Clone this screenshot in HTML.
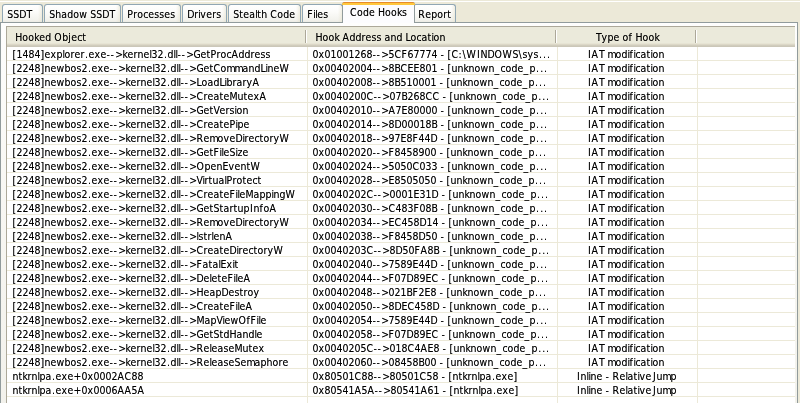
<!DOCTYPE html><html><head><meta charset="utf-8"><title>Code Hooks</title><style>

html,body{margin:0;padding:0}
body{width:800px;height:403px;overflow:hidden;background:#ECE9D8;position:relative;font:11px 'DejaVu Sans Condensed','DejaVu Sans','Liberation Sans',sans-serif;color:#000}
.topline{position:absolute;left:0;top:1px;width:800px;height:1px;background:#fff}
.tab{position:absolute;top:4px;height:18px;box-sizing:border-box;border:1px solid #91A7B4;border-bottom:none;border-radius:3px 3px 0 0;background:linear-gradient(to right,rgba(236,233,216,0) calc(100% - 4px),rgba(226,222,200,.35) calc(100% - 1px),rgba(226,222,200,.5) 100%),linear-gradient(#FFFFFF 0,#FCFCFA 40%,#F3F3EE 85%,#ECEBE4 100%)}
.sel{top:2px;height:21px;background:#FCFCFE;border-color:#919B9C;z-index:3}
.sel:before{content:"";position:absolute;left:-1px;right:-1px;top:-1px;height:3px;border-radius:3px 3px 0 0;background:linear-gradient(#E68B2C 0,#E68B2C 33%,#FFC73C 34%,#FFC73C 100%)}
.panel{position:absolute;left:0;top:22px;width:798px;height:400px;box-sizing:border-box;border:1px solid #919B9C;background:linear-gradient(#FEFEFD,#F8F7F3 45%,#F2F1EB)}
.list{position:absolute;left:6px;top:26px;width:789px;height:400px;box-sizing:border-box;border:1px solid #ACA899;border-right:none;border-bottom:none;background:#fff}
.hdr{position:absolute;left:0;top:0;width:788px;height:20px;background:linear-gradient(#EBEADB 0,#EBEADB 16px,#E2DECD 17px,#D6D2C2 18px,#CBC7B8 19px,#CBC7B8 20px)}
.sep{position:absolute;top:3px;height:13px;width:1px;background:#ACA899;border-right:1px solid #fff}
.row{position:absolute;left:0;width:788px;height:13px;border-bottom:1px solid #ECE9D8}
.vl{position:absolute;top:20px;width:1px;height:400px;background:#ECE9D8}
svg.txt{position:absolute;left:0;top:0;overflow:visible;filter:grayscale(1);font:11px 'DejaVu Sans Condensed','DejaVu Sans','Liberation Sans',sans-serif;font-stretch:condensed;fill:#000;text-shadow:0 0 0 rgba(0,0,0,.5);white-space:pre}

</style></head><body>
<div class="topline"></div>
<div class="panel"></div>
<div class="tabs">
<div class="tab" style="left:2px;width:41px"><svg class="txt" width="39" height="17"><g transform="scale(0.95,1)">
<text y="13" x="4.421 10.74 17.05 24.84">SSDT</text>
</g></svg></div>
<div class="tab" style="left:44px;width:77px"><svg class="txt" width="75" height="17"><g transform="scale(0.95,1)">
<text y="13" x="4.421 10.74 17.05 23.37 29.68 36 44.42 47.58 53.89 60.21 68">Shadow SSDT</text>
</g></svg></div>
<div class="tab" style="left:122px;width:59px"><svg class="txt" width="57" height="17"><g transform="scale(0.95,1)">
<text y="13" x="4.421 10.74 14.95 21.26 26.53 32.84 38.11 43.37 49.68">Processes</text>
</g></svg></div>
<div class="tab" style="left:182px;width:45px"><svg class="txt" width="43" height="17"><g transform="scale(0.95,1)">
<text y="13" x="4.421 11.79 16 18.11 24.42 30.74 34.95">Drivers</text>
</g></svg></div>
<div class="tab" style="left:228px;width:73px"><svg class="txt" width="71" height="17"><g transform="scale(0.95,1)">
<text y="13" x="4.421 10.74 14.95 21.26 27.58 29.68 33.89 40.21 43.37 50.74 57.05 63.37">Stealth Code</text>
</g></svg></div>
<div class="tab" style="left:302px;width:41px"><svg class="txt" width="39" height="17"><g transform="scale(0.95,1)">
<text y="13" x="4.421 10.74 12.84 14.95 21.26">Files</text>
</g></svg></div>
<div class="tab sel" style="left:342px;width:73px"><svg class="txt" width="71" height="17"><g transform="scale(0.95,1)">
<text y="13" x="7.263 14.63 20.95 27.26 33.58 36.74 44.11 50.42 56.74 62">Code Hooks</text>
</g></svg></div>
<div class="tab" style="left:413px;width:43px"><svg class="txt" width="41" height="17"><g transform="scale(0.95,1)">
<text y="13" x="4.421 11.79 18.11 24.42 30.74 34.95">Report</text>
</g></svg></div>
</div>
<div class="list">
<div class="hdr"><svg class="txt" width="788" height="20"><g transform="scale(0.95,1)">
<text y="14" x="8.632 16 22.32 28.63 33.89 40.21 46.53 49.68 58.11 64.42 67.58 73.89 79.16">Hooked Object</text>
<text y="14" x="324.7 332.1 338.4 344.7 350 353.2 360.5 366.8 373.2 377.4 383.7 388.9 394.2 397.4 403.7 410 416.3 419.5 424.7 431.1 436.3 442.6 446.8 448.9 455.3">Hook Address and Location</text>
<text y="14" x="619.9 625.8 632.1 638.4 644.7 647.9 654.2 658.4 661.6 668.9 675.3 681.6">Type of Hook</text>
</g></svg>
<div class="sep" style="left:298px"></div>
<div class="sep" style="left:548px"></div>
<div class="sep" style="left:688px"></div>
</div>
<div class="row" style="top:20px"><svg class="txt" width="788" height="14"><g transform="scale(0.95,1)">
<text y="11" x="5.789 10 16.32 22.63 28.95 35.26 39.47 45.79 52.11 58.42 60.53 66.84 71.05 77.37 82.21 85.79 92.11 98.42 104.7 108.9 114 121.6 126.8 133.2 137.4 143.7 150 152.1 158.4 165.4 168.9 175.3 177.4 179.5 183.7 188.7 196.3 203.7 210 214.2 220.5 224.7 231.1 236.3 243.7 250 256.3 260.5 266.8 272.1">[1484]explorer.exe-->kernel32.dll-->GetProcAddress</text>
<text y="11" x="321.6 327.9 334.2 340.5 346.8 353.2 359.5 365.8 372.1 378.4 384.7 388.9 394 401.6 407.9 415.3 421.6 427.9 434.2 440.5 446.8 453.2 456.3 460.5 463.7 467.9 475.3 479.5 483.7 494.8 498.4 505.8 513.2 521.6 532.1 538.4 542.6 547.9 554.2 560.1 564.3 568.5">0x01001268-->5CF67774 - [C:\WINDOWS\sys...</text>
<text y="11" x="611.7 615.3 623.1 628.9 632.1 640.5 646.8 653.2 655.3 659.5 661.6 666.8 673.2 677.4 679.5 685.8">IAT modification</text>
</g></svg></div>
<div class="row" style="top:34px"><svg class="txt" width="788" height="14"><g transform="scale(0.95,1)">
<text y="11" x="5.789 10 16.32 22.63 28.95 35.26 39.47 45.79 52.11 60.53 66.84 73.16 78.42 85.37 88.95 95.26 101.6 107.9 112.1 117.2 124.7 130 136.3 140.5 146.8 153.2 155.3 161.6 168.5 172.1 178.4 180.5 182.6 186.8 191.9 199.5 206.8 213.2 217.4 224.7 231.1 239.5 247.9 254.2 260.5 266.8 272.1 274.2 280.5 286.8">[2248]newbos2.exe-->kernel32.dll-->GetCommandLineW</text>
<text y="11" x="321.6 327.9 334.2 340.5 346.8 353.2 359.5 365.8 372.1 378.4 384.7 388.9 394 401.6 407.9 414.2 421.6 427.9 434.2 440.5 446.8 453.2 456.3 460.5 463.7 467.9 474.2 480.5 485.8 492.1 498.4 506.8 513.2 519.5 524.7 531.1 537.4 543.7 550 556.9 561.2 565.4">0x00402004-->8BCEE801 - [unknown_code_p...</text>
<text y="11" x="611.7 615.3 623.1 628.9 632.1 640.5 646.8 653.2 655.3 659.5 661.6 666.8 673.2 677.4 679.5 685.8">IAT modification</text>
</g></svg></div>
<div class="row" style="top:48px"><svg class="txt" width="788" height="14"><g transform="scale(0.95,1)">
<text y="11" x="5.789 10 16.32 22.63 28.95 35.26 39.47 45.79 52.11 60.53 66.84 73.16 78.42 85.37 88.95 95.26 101.6 107.9 112.1 117.2 124.7 130 136.3 140.5 146.8 153.2 155.3 161.6 168.5 172.1 178.4 180.5 182.6 186.8 191.9 199.5 204.7 211.1 217.4 223.7 228.9 231.1 237.4 241.6 247.9 252.1 258.4">[2248]newbos2.exe-->kernel32.dll-->LoadLibraryA</text>
<text y="11" x="321.6 327.9 334.2 340.5 346.8 353.2 359.5 365.8 372.1 378.4 384.7 388.9 394 401.6 407.9 414.2 420.5 426.8 433.2 439.5 445.8 452.1 455.3 459.5 462.6 466.8 473.2 479.5 484.7 491.1 497.4 505.8 512.1 518.4 523.7 530 536.3 542.6 548.9 555.9 560.1 564.3">0x00402008-->8B510001 - [unknown_code_p...</text>
<text y="11" x="611.7 615.3 623.1 628.9 632.1 640.5 646.8 653.2 655.3 659.5 661.6 666.8 673.2 677.4 679.5 685.8">IAT modification</text>
</g></svg></div>
<div class="row" style="top:62px"><svg class="txt" width="788" height="14"><g transform="scale(0.95,1)">
<text y="11" x="5.789 10 16.32 22.63 28.95 35.26 39.47 45.79 52.11 60.53 66.84 73.16 78.42 85.37 88.95 95.26 101.6 107.9 112.1 117.2 124.7 130 136.3 140.5 146.8 153.2 155.3 161.6 168.5 172.1 178.4 180.5 182.6 186.8 191.9 199.5 206.8 211.1 217.4 223.7 227.9 234.2 242.6 248.9 253.2 259.5 265.8">[2248]newbos2.exe-->kernel32.dll-->CreateMutexA</text>
<text y="11" x="321.6 327.9 334.2 340.5 346.8 353.2 359.5 365.8 372.1 378.4 385.8 390 395.1 402.6 408.9 415.3 421.6 427.9 434.2 440.5 447.9 455.3 458.4 462.6 465.8 470 476.3 482.6 487.9 494.2 500.5 508.9 515.3 521.6 526.8 533.2 539.5 545.8 552.1 559.1 563.3 567.5">0x0040200C-->07B268CC - [unknown_code_p...</text>
<text y="11" x="611.7 615.3 623.1 628.9 632.1 640.5 646.8 653.2 655.3 659.5 661.6 666.8 673.2 677.4 679.5 685.8">IAT modification</text>
</g></svg></div>
<div class="row" style="top:76px"><svg class="txt" width="788" height="14"><g transform="scale(0.95,1)">
<text y="11" x="5.789 10 16.32 22.63 28.95 35.26 39.47 45.79 52.11 60.53 66.84 73.16 78.42 85.37 88.95 95.26 101.6 107.9 112.1 117.2 124.7 130 136.3 140.5 146.8 153.2 155.3 161.6 168.5 172.1 178.4 180.5 182.6 186.8 191.9 199.5 206.8 213.2 217.4 223.7 230 234.2 239.5 241.6 247.9">[2248]newbos2.exe-->kernel32.dll-->GetVersion</text>
<text y="11" x="321.6 327.9 334.2 340.5 346.8 353.2 359.5 365.8 372.1 378.4 384.7 388.9 394 401.6 408.9 415.3 421.6 427.9 434.2 440.5 446.8 453.2 456.3 460.5 463.7 467.9 474.2 480.5 485.8 492.1 498.4 506.8 513.2 519.5 524.7 531.1 537.4 543.7 550 556.9 561.2 565.4">0x00402010-->A7E80000 - [unknown_code_p...</text>
<text y="11" x="611.7 615.3 623.1 628.9 632.1 640.5 646.8 653.2 655.3 659.5 661.6 666.8 673.2 677.4 679.5 685.8">IAT modification</text>
</g></svg></div>
<div class="row" style="top:90px"><svg class="txt" width="788" height="14"><g transform="scale(0.95,1)">
<text y="11" x="5.789 10 16.32 22.63 28.95 35.26 39.47 45.79 52.11 60.53 66.84 73.16 78.42 85.37 88.95 95.26 101.6 107.9 112.1 117.2 124.7 130 136.3 140.5 146.8 153.2 155.3 161.6 168.5 172.1 178.4 180.5 182.6 186.8 191.9 199.5 206.8 211.1 217.4 223.7 227.9 234.2 240.5 242.6 248.9">[2248]newbos2.exe-->kernel32.dll-->CreatePipe</text>
<text y="11" x="321.6 327.9 334.2 340.5 346.8 353.2 359.5 365.8 372.1 378.4 384.7 388.9 394 401.6 407.9 415.3 421.6 427.9 434.2 440.5 446.8 453.2 456.3 460.5 463.7 467.9 474.2 480.5 485.8 492.1 498.4 506.8 513.2 519.5 524.7 531.1 537.4 543.7 550 556.9 561.2 565.4">0x00402014-->8D00018B - [unknown_code_p...</text>
<text y="11" x="611.7 615.3 623.1 628.9 632.1 640.5 646.8 653.2 655.3 659.5 661.6 666.8 673.2 677.4 679.5 685.8">IAT modification</text>
</g></svg></div>
<div class="row" style="top:104px"><svg class="txt" width="788" height="14"><g transform="scale(0.95,1)">
<text y="11" x="5.789 10 16.32 22.63 28.95 35.26 39.47 45.79 52.11 60.53 66.84 73.16 78.42 85.37 88.95 95.26 101.6 107.9 112.1 117.2 124.7 130 136.3 140.5 146.8 153.2 155.3 161.6 168.5 172.1 178.4 180.5 182.6 186.8 191.9 199.5 206.8 213.2 221.6 227.9 234.2 240.5 247.9 250 254.2 260.5 265.8 270 276.3 280.5 286.8">[2248]newbos2.exe-->kernel32.dll-->RemoveDirectoryW</text>
<text y="11" x="321.6 327.9 334.2 340.5 346.8 353.2 359.5 365.8 372.1 378.4 384.7 388.9 394 401.6 407.9 414.2 420.5 426.8 433.2 439.5 445.8 453.2 456.3 460.5 463.7 467.9 474.2 480.5 485.8 492.1 498.4 506.8 513.2 519.5 524.7 531.1 537.4 543.7 550 556.9 561.2 565.4">0x00402018-->97E8F44D - [unknown_code_p...</text>
<text y="11" x="611.7 615.3 623.1 628.9 632.1 640.5 646.8 653.2 655.3 659.5 661.6 666.8 673.2 677.4 679.5 685.8">IAT modification</text>
</g></svg></div>
<div class="row" style="top:118px"><svg class="txt" width="788" height="14"><g transform="scale(0.95,1)">
<text y="11" x="5.789 10 16.32 22.63 28.95 35.26 39.47 45.79 52.11 60.53 66.84 73.16 78.42 85.37 88.95 95.26 101.6 107.9 112.1 117.2 124.7 130 136.3 140.5 146.8 153.2 155.3 161.6 168.5 172.1 178.4 180.5 182.6 186.8 191.9 199.5 206.8 213.2 217.4 223.7 225.8 227.9 234.2 240.5 242.6 247.9">[2248]newbos2.exe-->kernel32.dll-->GetFileSize</text>
<text y="11" x="321.6 327.9 334.2 340.5 346.8 353.2 359.5 365.8 372.1 378.4 384.7 388.9 394 401.6 407.9 414.2 420.5 426.8 433.2 439.5 445.8 452.1 455.3 459.5 462.6 466.8 473.2 479.5 484.7 491.1 497.4 505.8 512.1 518.4 523.7 530 536.3 542.6 548.9 555.9 560.1 564.3">0x00402020-->F8458900 - [unknown_code_p...</text>
<text y="11" x="611.7 615.3 623.1 628.9 632.1 640.5 646.8 653.2 655.3 659.5 661.6 666.8 673.2 677.4 679.5 685.8">IAT modification</text>
</g></svg></div>
<div class="row" style="top:132px"><svg class="txt" width="788" height="14"><g transform="scale(0.95,1)">
<text y="11" x="5.789 10 16.32 22.63 28.95 35.26 39.47 45.79 52.11 60.53 66.84 73.16 78.42 85.37 88.95 95.26 101.6 107.9 112.1 117.2 124.7 130 136.3 140.5 146.8 153.2 155.3 161.6 168.5 172.1 178.4 180.5 182.6 186.8 191.9 199.5 207.9 214.2 220.5 226.8 233.2 239.5 245.8 252.1 256.3">[2248]newbos2.exe-->kernel32.dll-->OpenEventW</text>
<text y="11" x="321.6 327.9 334.2 340.5 346.8 353.2 359.5 365.8 372.1 378.4 384.7 388.9 394 401.6 407.9 414.2 420.5 426.8 434.2 440.5 446.8 453.2 456.3 460.5 463.7 467.9 474.2 480.5 485.8 492.1 498.4 506.8 513.2 519.5 524.7 531.1 537.4 543.7 550 556.9 561.2 565.4">0x00402024-->5050C033 - [unknown_code_p...</text>
<text y="11" x="611.7 615.3 623.1 628.9 632.1 640.5 646.8 653.2 655.3 659.5 661.6 666.8 673.2 677.4 679.5 685.8">IAT modification</text>
</g></svg></div>
<div class="row" style="top:146px"><svg class="txt" width="788" height="14"><g transform="scale(0.95,1)">
<text y="11" x="5.789 10 16.32 22.63 28.95 35.26 39.47 45.79 52.11 60.53 66.84 73.16 78.42 85.37 88.95 95.26 101.6 107.9 112.1 117.2 124.7 130 136.3 140.5 146.8 153.2 155.3 161.6 168.5 172.1 178.4 180.5 182.6 186.8 191.9 199.5 205.8 207.9 212.1 216.3 222.6 228.9 231.1 237.4 241.6 247.9 252.1 258.4 263.7">[2248]newbos2.exe-->kernel32.dll-->VirtualProtect</text>
<text y="11" x="321.6 327.9 334.2 340.5 346.8 353.2 359.5 365.8 372.1 378.4 384.7 388.9 394 401.6 407.9 414.2 420.5 426.8 433.2 439.5 445.8 452.1 455.3 459.5 462.6 466.8 473.2 479.5 484.7 491.1 497.4 505.8 512.1 518.4 523.7 530 536.3 542.6 548.9 555.9 560.1 564.3">0x00402028-->E8505050 - [unknown_code_p...</text>
<text y="11" x="611.7 615.3 623.1 628.9 632.1 640.5 646.8 653.2 655.3 659.5 661.6 666.8 673.2 677.4 679.5 685.8">IAT modification</text>
</g></svg></div>
<div class="row" style="top:160px"><svg class="txt" width="788" height="14"><g transform="scale(0.95,1)">
<text y="11" x="5.789 10 16.32 22.63 28.95 35.26 39.47 45.79 52.11 60.53 66.84 73.16 78.42 85.37 88.95 95.26 101.6 107.9 112.1 117.2 124.7 130 136.3 140.5 146.8 153.2 155.3 161.6 168.5 172.1 178.4 180.5 182.6 186.8 191.9 199.5 206.8 211.1 217.4 223.7 227.9 234.2 240.5 242.6 244.7 251.1 259.5 265.8 272.1 278.4 280.5 286.8 293.2">[2248]newbos2.exe-->kernel32.dll-->CreateFileMappingW</text>
<text y="11" x="321.6 327.9 334.2 340.5 346.8 353.2 359.5 365.8 372.1 378.4 385.8 390 395.1 402.6 408.9 415.3 421.6 427.9 434.2 440.5 446.8 454.2 457.4 461.6 464.7 468.9 475.3 481.6 486.8 493.2 499.5 507.9 514.2 520.5 525.8 532.1 538.4 544.7 551.1 558 562.2 566.4">0x0040202C-->0001E31D - [unknown_code_p...</text>
<text y="11" x="611.7 615.3 623.1 628.9 632.1 640.5 646.8 653.2 655.3 659.5 661.6 666.8 673.2 677.4 679.5 685.8">IAT modification</text>
</g></svg></div>
<div class="row" style="top:174px"><svg class="txt" width="788" height="14"><g transform="scale(0.95,1)">
<text y="11" x="5.789 10 16.32 22.63 28.95 35.26 39.47 45.79 52.11 60.53 66.84 73.16 78.42 85.37 88.95 95.26 101.6 107.9 112.1 117.2 124.7 130 136.3 140.5 146.8 153.2 155.3 161.6 168.5 172.1 178.4 180.5 182.6 186.8 191.9 199.5 206.8 213.2 217.4 223.7 227.9 234.2 238.4 242.6 248.9 255.9 259.5 265.8 270 276.3">[2248]newbos2.exe-->kernel32.dll-->GetStartupInfoA</text>
<text y="11" x="321.6 327.9 334.2 340.5 346.8 353.2 359.5 365.8 372.1 378.4 384.7 388.9 394 401.6 408.9 415.3 421.6 427.9 434.2 440.5 446.8 453.2 456.3 460.5 463.7 467.9 474.2 480.5 485.8 492.1 498.4 506.8 513.2 519.5 524.7 531.1 537.4 543.7 550 556.9 561.2 565.4">0x00402030-->C483F08B - [unknown_code_p...</text>
<text y="11" x="611.7 615.3 623.1 628.9 632.1 640.5 646.8 653.2 655.3 659.5 661.6 666.8 673.2 677.4 679.5 685.8">IAT modification</text>
</g></svg></div>
<div class="row" style="top:188px"><svg class="txt" width="788" height="14"><g transform="scale(0.95,1)">
<text y="11" x="5.789 10 16.32 22.63 28.95 35.26 39.47 45.79 52.11 60.53 66.84 73.16 78.42 85.37 88.95 95.26 101.6 107.9 112.1 117.2 124.7 130 136.3 140.5 146.8 153.2 155.3 161.6 168.5 172.1 178.4 180.5 182.6 186.8 191.9 199.5 206.8 213.2 221.6 227.9 234.2 240.5 247.9 250 254.2 260.5 265.8 270 276.3 280.5 286.8">[2248]newbos2.exe-->kernel32.dll-->RemoveDirectoryW</text>
<text y="11" x="321.6 327.9 334.2 340.5 346.8 353.2 359.5 365.8 372.1 378.4 384.7 388.9 394 401.6 407.9 415.3 421.6 427.9 434.2 441.6 447.9 454.2 457.4 461.6 464.7 468.9 475.3 481.6 486.8 493.2 499.5 507.9 514.2 520.5 525.8 532.1 538.4 544.7 551.1 558 562.2 566.4">0x00402034-->EC458D14 - [unknown_code_p...</text>
<text y="11" x="611.7 615.3 623.1 628.9 632.1 640.5 646.8 653.2 655.3 659.5 661.6 666.8 673.2 677.4 679.5 685.8">IAT modification</text>
</g></svg></div>
<div class="row" style="top:202px"><svg class="txt" width="788" height="14"><g transform="scale(0.95,1)">
<text y="11" x="5.789 10 16.32 22.63 28.95 35.26 39.47 45.79 52.11 60.53 66.84 73.16 78.42 85.37 88.95 95.26 101.6 107.9 112.1 117.2 124.7 130 136.3 140.5 146.8 153.2 155.3 161.6 168.5 172.1 178.4 180.5 182.6 186.8 191.9 199.5 201.6 206.8 211.1 215.3 217.4 223.7 230">[2248]newbos2.exe-->kernel32.dll-->lstrlenA</text>
<text y="11" x="321.6 327.9 334.2 340.5 346.8 353.2 359.5 365.8 372.1 378.4 384.7 388.9 394 401.6 407.9 414.2 420.5 426.8 433.2 440.5 446.8 453.2 456.3 460.5 463.7 467.9 474.2 480.5 485.8 492.1 498.4 506.8 513.2 519.5 524.7 531.1 537.4 543.7 550 556.9 561.2 565.4">0x00402038-->F8458D50 - [unknown_code_p...</text>
<text y="11" x="611.7 615.3 623.1 628.9 632.1 640.5 646.8 653.2 655.3 659.5 661.6 666.8 673.2 677.4 679.5 685.8">IAT modification</text>
</g></svg></div>
<div class="row" style="top:216px"><svg class="txt" width="788" height="14"><g transform="scale(0.95,1)">
<text y="11" x="5.789 10 16.32 22.63 28.95 35.26 39.47 45.79 52.11 60.53 66.84 73.16 78.42 85.37 88.95 95.26 101.6 107.9 112.1 117.2 124.7 130 136.3 140.5 146.8 153.2 155.3 161.6 168.5 172.1 178.4 180.5 182.6 186.8 191.9 199.5 206.8 211.1 217.4 223.7 227.9 234.2 241.6 243.7 247.9 254.2 259.5 263.7 270 274.2 280.5">[2248]newbos2.exe-->kernel32.dll-->CreateDirectoryW</text>
<text y="11" x="321.6 327.9 334.2 340.5 346.8 353.2 359.5 365.8 372.1 378.4 385.8 390 395.1 402.6 408.9 416.3 422.6 428.9 435.3 442.6 448.9 455.3 458.4 462.6 465.8 470 476.3 482.6 487.9 494.2 500.5 508.9 515.3 521.6 526.8 533.2 539.5 545.8 552.1 559.1 563.3 567.5">0x0040203C-->8D50FA8B - [unknown_code_p...</text>
<text y="11" x="611.7 615.3 623.1 628.9 632.1 640.5 646.8 653.2 655.3 659.5 661.6 666.8 673.2 677.4 679.5 685.8">IAT modification</text>
</g></svg></div>
<div class="row" style="top:230px"><svg class="txt" width="788" height="14"><g transform="scale(0.95,1)">
<text y="11" x="5.789 10 16.32 22.63 28.95 35.26 39.47 45.79 52.11 60.53 66.84 73.16 78.42 85.37 88.95 95.26 101.6 107.9 112.1 117.2 124.7 130 136.3 140.5 146.8 153.2 155.3 161.6 168.5 172.1 178.4 180.5 182.6 186.8 191.9 199.5 205.8 212.1 216.3 222.6 224.7 231.1 237.4 239.5">[2248]newbos2.exe-->kernel32.dll-->FatalExit</text>
<text y="11" x="321.6 327.9 334.2 340.5 346.8 353.2 359.5 365.8 372.1 378.4 384.7 388.9 394 401.6 407.9 414.2 420.5 426.8 433.2 439.5 445.8 453.2 456.3 460.5 463.7 467.9 474.2 480.5 485.8 492.1 498.4 506.8 513.2 519.5 524.7 531.1 537.4 543.7 550 556.9 561.2 565.4">0x00402040-->7589E44D - [unknown_code_p...</text>
<text y="11" x="611.7 615.3 623.1 628.9 632.1 640.5 646.8 653.2 655.3 659.5 661.6 666.8 673.2 677.4 679.5 685.8">IAT modification</text>
</g></svg></div>
<div class="row" style="top:244px"><svg class="txt" width="788" height="14"><g transform="scale(0.95,1)">
<text y="11" x="5.789 10 16.32 22.63 28.95 35.26 39.47 45.79 52.11 60.53 66.84 73.16 78.42 85.37 88.95 95.26 101.6 107.9 112.1 117.2 124.7 130 136.3 140.5 146.8 153.2 155.3 161.6 168.5 172.1 178.4 180.5 182.6 186.8 191.9 199.5 206.8 213.2 215.3 221.6 225.8 232.1 238.4 240.5 242.6 248.9">[2248]newbos2.exe-->kernel32.dll-->DeleteFileA</text>
<text y="11" x="321.6 327.9 334.2 340.5 346.8 353.2 359.5 365.8 372.1 378.4 384.7 388.9 394 401.6 407.9 414.2 420.5 427.9 434.2 440.5 446.8 454.2 457.4 461.6 464.7 468.9 475.3 481.6 486.8 493.2 499.5 507.9 514.2 520.5 525.8 532.1 538.4 544.7 551.1 558 562.2 566.4">0x00402044-->F07D89EC - [unknown_code_p...</text>
<text y="11" x="611.7 615.3 623.1 628.9 632.1 640.5 646.8 653.2 655.3 659.5 661.6 666.8 673.2 677.4 679.5 685.8">IAT modification</text>
</g></svg></div>
<div class="row" style="top:258px"><svg class="txt" width="788" height="14"><g transform="scale(0.95,1)">
<text y="11" x="5.789 10 16.32 22.63 28.95 35.26 39.47 45.79 52.11 60.53 66.84 73.16 78.42 85.37 88.95 95.26 101.6 107.9 112.1 117.2 124.7 130 136.3 140.5 146.8 153.2 155.3 161.6 168.5 172.1 178.4 180.5 182.6 186.8 191.9 199.5 206.8 213.2 219.5 225.8 233.2 239.5 244.7 248.9 253.2 259.5">[2248]newbos2.exe-->kernel32.dll-->HeapDestroy</text>
<text y="11" x="321.6 327.9 334.2 340.5 346.8 353.2 359.5 365.8 372.1 378.4 384.7 388.9 394 401.6 407.9 414.2 420.5 426.8 433.2 439.5 445.8 452.1 455.3 459.5 462.6 466.8 473.2 479.5 484.7 491.1 497.4 505.8 512.1 518.4 523.7 530 536.3 542.6 548.9 555.9 560.1 564.3">0x00402048-->021BF2E8 - [unknown_code_p...</text>
<text y="11" x="611.7 615.3 623.1 628.9 632.1 640.5 646.8 653.2 655.3 659.5 661.6 666.8 673.2 677.4 679.5 685.8">IAT modification</text>
</g></svg></div>
<div class="row" style="top:272px"><svg class="txt" width="788" height="14"><g transform="scale(0.95,1)">
<text y="11" x="5.789 10 16.32 22.63 28.95 35.26 39.47 45.79 52.11 60.53 66.84 73.16 78.42 85.37 88.95 95.26 101.6 107.9 112.1 117.2 124.7 130 136.3 140.5 146.8 153.2 155.3 161.6 168.5 172.1 178.4 180.5 182.6 186.8 191.9 199.5 206.8 211.1 217.4 223.7 227.9 234.2 240.5 242.6 244.7 251.1">[2248]newbos2.exe-->kernel32.dll-->CreateFileA</text>
<text y="11" x="321.6 327.9 334.2 340.5 346.8 353.2 359.5 365.8 372.1 378.4 384.7 388.9 394 401.6 407.9 415.3 421.6 428.9 435.3 441.6 447.9 455.3 458.4 462.6 465.8 470 476.3 482.6 487.9 494.2 500.5 508.9 515.3 521.6 526.8 533.2 539.5 545.8 552.1 559.1 563.3 567.5">0x00402050-->8DEC458D - [unknown_code_p...</text>
<text y="11" x="611.7 615.3 623.1 628.9 632.1 640.5 646.8 653.2 655.3 659.5 661.6 666.8 673.2 677.4 679.5 685.8">IAT modification</text>
</g></svg></div>
<div class="row" style="top:286px"><svg class="txt" width="788" height="14"><g transform="scale(0.95,1)">
<text y="11" x="5.789 10 16.32 22.63 28.95 35.26 39.47 45.79 52.11 60.53 66.84 73.16 78.42 85.37 88.95 95.26 101.6 107.9 112.1 117.2 124.7 130 136.3 140.5 146.8 153.2 155.3 161.6 168.5 172.1 178.4 180.5 182.6 186.8 191.9 199.5 207.9 214.2 220.5 226.8 228.9 235.3 243.7 252.1 256.3 262.6 264.7 266.8">[2248]newbos2.exe-->kernel32.dll-->MapViewOfFile</text>
<text y="11" x="321.6 327.9 334.2 340.5 346.8 353.2 359.5 365.8 372.1 378.4 384.7 388.9 394 401.6 407.9 414.2 420.5 426.8 433.2 439.5 445.8 453.2 456.3 460.5 463.7 467.9 474.2 480.5 485.8 492.1 498.4 506.8 513.2 519.5 524.7 531.1 537.4 543.7 550 556.9 561.2 565.4">0x00402054-->7589E44D - [unknown_code_p...</text>
<text y="11" x="611.7 615.3 623.1 628.9 632.1 640.5 646.8 653.2 655.3 659.5 661.6 666.8 673.2 677.4 679.5 685.8">IAT modification</text>
</g></svg></div>
<div class="row" style="top:300px"><svg class="txt" width="788" height="14"><g transform="scale(0.95,1)">
<text y="11" x="5.789 10 16.32 22.63 28.95 35.26 39.47 45.79 52.11 60.53 66.84 73.16 78.42 85.37 88.95 95.26 101.6 107.9 112.1 117.2 124.7 130 136.3 140.5 146.8 153.2 155.3 161.6 168.5 172.1 178.4 180.5 182.6 186.8 191.9 199.5 206.8 213.2 217.4 223.7 227.9 234.2 241.6 247.9 254.2 260.5 262.6">[2248]newbos2.exe-->kernel32.dll-->GetStdHandle</text>
<text y="11" x="321.6 327.9 334.2 340.5 346.8 353.2 359.5 365.8 372.1 378.4 384.7 388.9 394 401.6 407.9 414.2 420.5 427.9 434.2 440.5 446.8 454.2 457.4 461.6 464.7 468.9 475.3 481.6 486.8 493.2 499.5 507.9 514.2 520.5 525.8 532.1 538.4 544.7 551.1 558 562.2 566.4">0x00402058-->F07D89EC - [unknown_code_p...</text>
<text y="11" x="611.7 615.3 623.1 628.9 632.1 640.5 646.8 653.2 655.3 659.5 661.6 666.8 673.2 677.4 679.5 685.8">IAT modification</text>
</g></svg></div>
<div class="row" style="top:314px"><svg class="txt" width="788" height="14"><g transform="scale(0.95,1)">
<text y="11" x="5.789 10 16.32 22.63 28.95 35.26 39.47 45.79 52.11 60.53 66.84 73.16 78.42 85.37 88.95 95.26 101.6 107.9 112.1 117.2 124.7 130 136.3 140.5 146.8 153.2 155.3 161.6 168.5 172.1 178.4 180.5 182.6 186.8 191.9 199.5 206.8 213.2 215.3 221.6 227.9 233.2 239.5 247.9 254.2 258.4 264.7">[2248]newbos2.exe-->kernel32.dll-->ReleaseMutex</text>
<text y="11" x="321.6 327.9 334.2 340.5 346.8 353.2 359.5 365.8 372.1 378.4 385.8 390 395.1 402.6 408.9 415.3 421.6 428.9 435.3 442.6 448.9 455.3 458.4 462.6 465.8 470 476.3 482.6 487.9 494.2 500.5 508.9 515.3 521.6 526.8 533.2 539.5 545.8 552.1 559.1 563.3 567.5">0x0040205C-->018C4AE8 - [unknown_code_p...</text>
<text y="11" x="611.7 615.3 623.1 628.9 632.1 640.5 646.8 653.2 655.3 659.5 661.6 666.8 673.2 677.4 679.5 685.8">IAT modification</text>
</g></svg></div>
<div class="row" style="top:328px"><svg class="txt" width="788" height="14"><g transform="scale(0.95,1)">
<text y="11" x="5.789 10 16.32 22.63 28.95 35.26 39.47 45.79 52.11 60.53 66.84 73.16 78.42 85.37 88.95 95.26 101.6 107.9 112.1 117.2 124.7 130 136.3 140.5 146.8 153.2 155.3 161.6 168.5 172.1 178.4 180.5 182.6 186.8 191.9 199.5 206.8 213.2 215.3 221.6 227.9 233.2 239.5 245.8 252.1 260.5 266.8 273.2 279.5 285.8 290">[2248]newbos2.exe-->kernel32.dll-->ReleaseSemaphore</text>
<text y="11" x="321.6 327.9 334.2 340.5 346.8 353.2 359.5 365.8 372.1 378.4 384.7 388.9 394 401.6 407.9 414.2 420.5 426.8 433.2 439.5 445.8 452.1 455.3 459.5 462.6 466.8 473.2 479.5 484.7 491.1 497.4 505.8 512.1 518.4 523.7 530 536.3 542.6 548.9 555.9 560.1 564.3">0x00402060-->08458B00 - [unknown_code_p...</text>
<text y="11" x="611.7 615.3 623.1 628.9 632.1 640.5 646.8 653.2 655.3 659.5 661.6 666.8 673.2 677.4 679.5 685.8">IAT modification</text>
</g></svg></div>
<div class="row" style="top:342px"><svg class="txt" width="788" height="14"><g transform="scale(0.95,1)">
<text y="11" x="5.789 12.11 16.32 21.58 25.79 32.11 34.21 40.53 47.47 51.05 57.37 63.68 70 78.42 84.74 91.05 97.37 103.7 110 116.3 123.7 131.1 137.4">ntkrnlpa.exe+0x0002AC88</text>
<text y="11" x="321.6 327.9 334.2 340.5 346.8 353.2 359.5 365.8 373.2 379.5 385.8 390 395.1 402.6 408.9 415.3 421.6 427.9 434.2 441.6 447.9 454.2 457.4 461.6 464.7 468.9 475.3 479.5 484.7 488.9 495.3 497.4 503.7 510.6 514.2 520.5 526.8 533.2">0x80501C88-->80501C58 - [ntkrnlpa.exe]</text>
<text y="11" x="600.1 603.7 610 612.1 614.2 620.5 626.8 630 634.2 637.4 644.7 651.1 653.2 659.5 663.7 665.8 672.1 680 683.7 690 698.4">Inline - RelativeJump</text>
</g></svg></div>
<div class="row" style="top:356px"><svg class="txt" width="788" height="14"><g transform="scale(0.95,1)">
<text y="11" x="5.789 12.11 16.32 21.58 25.79 32.11 34.21 40.53 47.47 51.05 57.37 63.68 70 78.42 84.74 91.05 97.37 103.7 110 116.3 123.7 131.1 137.4">ntkrnlpa.exe+0x0006AA5A</text>
<text y="11" x="321.6 327.9 334.2 340.5 346.8 353.2 359.5 365.8 373.2 379.5 386.8 391.1 396.1 403.7 410 416.3 422.6 428.9 435.3 442.6 448.9 455.3 458.4 462.6 465.8 470 476.3 480.5 485.8 490 496.3 498.4 504.7 511.7 515.3 521.6 527.9 534.2">0x80541A5A-->80541A61 - [ntkrnlpa.exe]</text>
<text y="11" x="600.1 603.7 610 612.1 614.2 620.5 626.8 630 634.2 637.4 644.7 651.1 653.2 659.5 663.7 665.8 672.1 680 683.7 690 698.4">Inline - RelativeJump</text>
</g></svg></div>
<div class="vl" style="left:300px"></div>
<div class="vl" style="left:550px"></div>
<div class="vl" style="left:690px"></div>
</div>
</body></html>
